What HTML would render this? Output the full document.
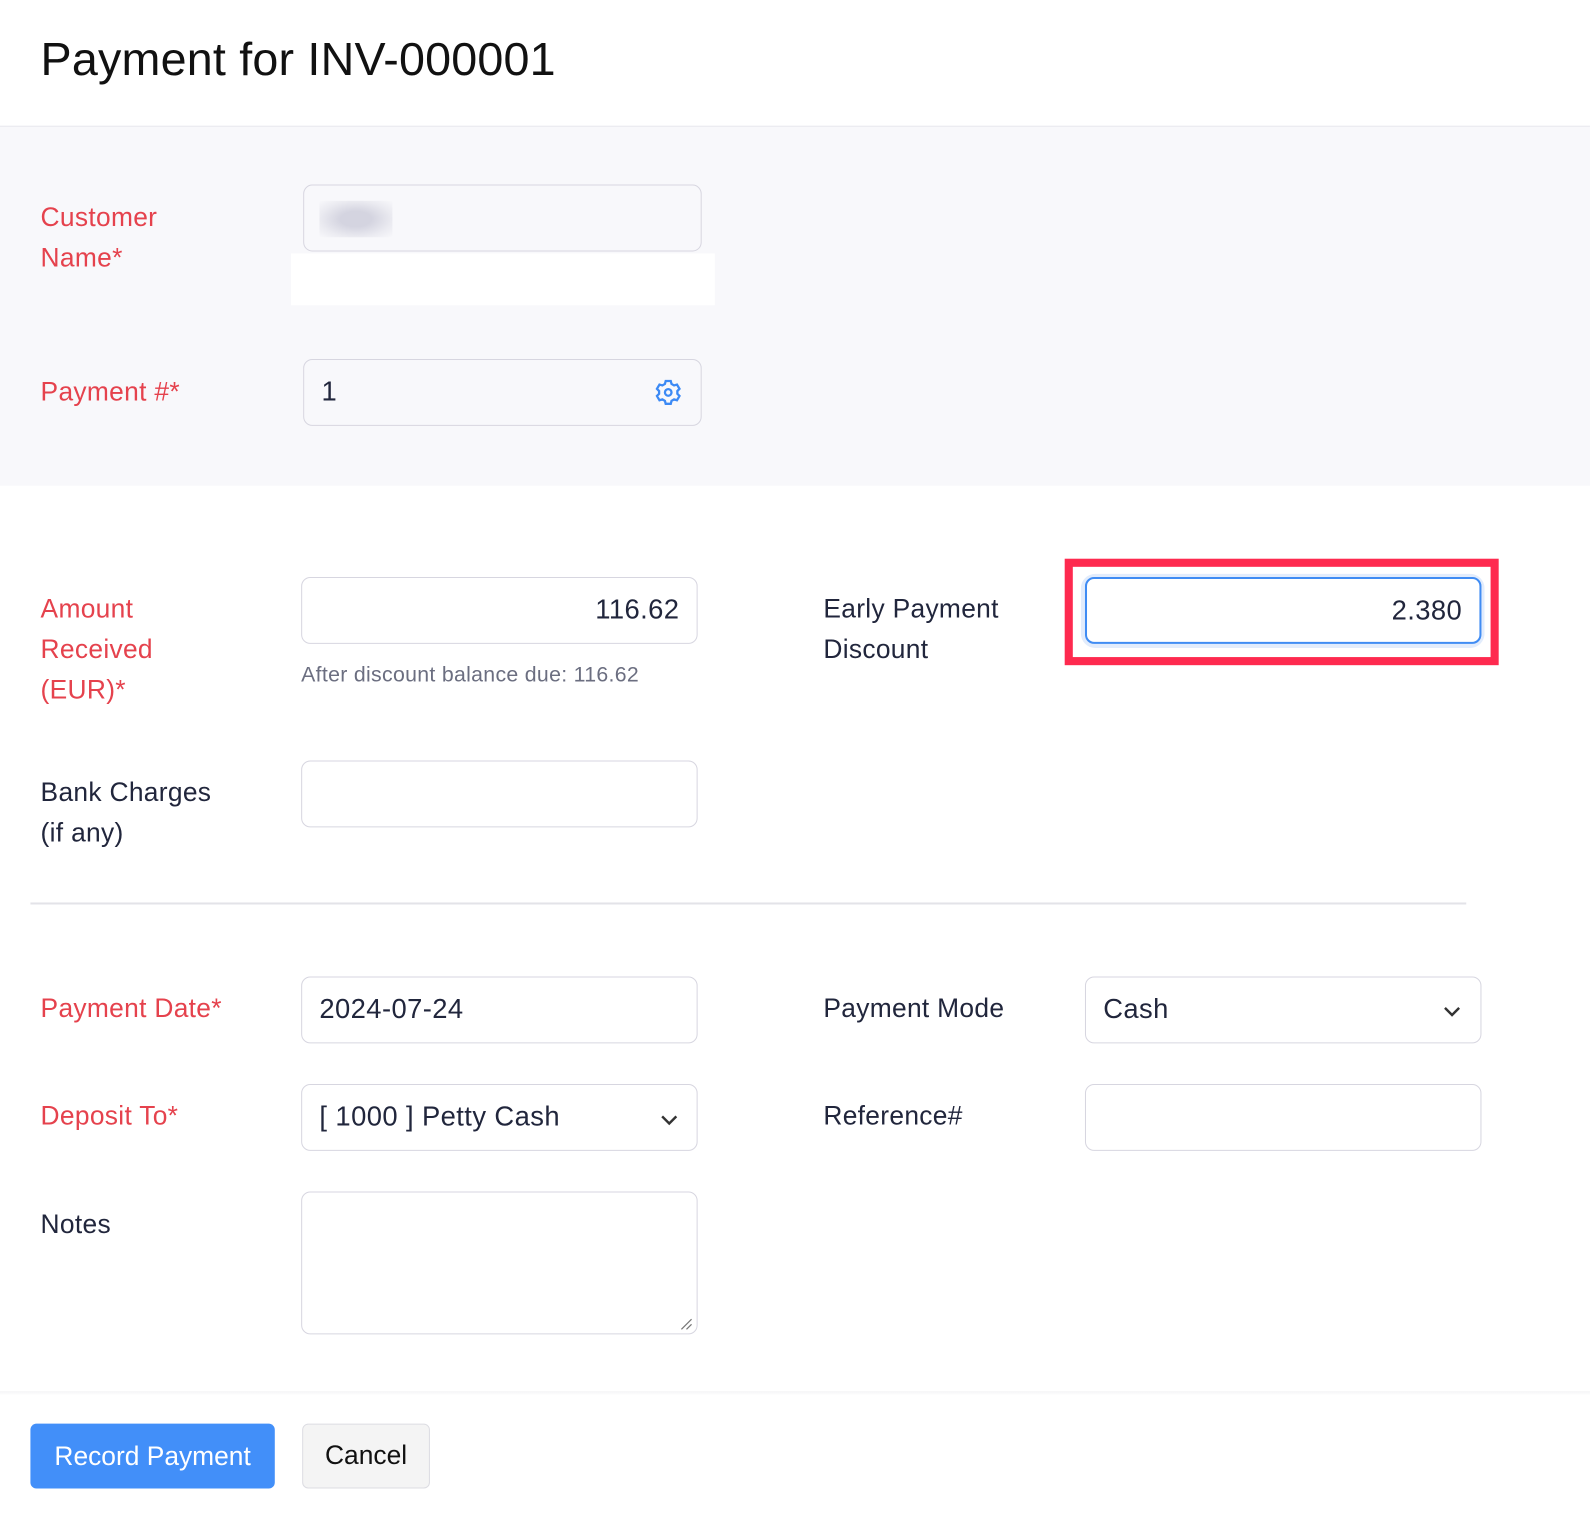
<!DOCTYPE html><html><head><style>
*{box-sizing:border-box;margin:0;padding:0}
body{width:1590px;height:1518px;background:#fff;font-family:"Liberation Sans",sans-serif;color:#21263c;overflow:hidden}
#w{position:relative;width:1568px;height:1497px;transform:scale(1.014);transform-origin:0 0}
.a{position:absolute}
.lbl{position:absolute;font-size:26px;line-height:40px;letter-spacing:0.3px}
.red{color:#e5424d}
.inp{position:absolute;border:1.5px solid #d7d6e0;border-radius:9px;background:#fff;font-size:27px;line-height:63px;padding:0 17px;letter-spacing:0.4px}
</style></head><body><div id="w">
<div class="a" style="left:40px;top:31px;font-size:46px;color:#111;letter-spacing:0.2px">Payment for INV-000001</div>
<div class="a" style="left:0;top:124px;width:1568px;height:355px;background:#f8f8fb;border-top:1px solid #e8e8ee"></div>
<div class="lbl red" style="left:40px;top:194px">Customer<br>Name*</div>
<div class="inp" style="left:299px;top:182px;width:393px;height:66px;background:#f8f8fb"></div>
<div class="a" style="left:315px;top:198px;width:72px;height:36px;background:radial-gradient(ellipse at center,#d4d4e0 30%,#ebebf1 70%,#f8f8fb 100%)"></div>
<div class="a" style="left:287px;top:250px;width:418px;height:51px;background:#fff"></div>
<div class="lbl red" style="left:40px;top:366px">Payment #*</div>
<div class="inp" style="left:299px;top:354px;width:393px;height:66px;background:#f8f8fb">1</div>
<svg class="a" style="left:644px;top:372px" width="30" height="30" viewBox="0 0 24 24" fill="none" stroke="#3c8af5" stroke-width="1.8"><path d="M10 3h4l.6 2.3 2 1.2 2.3-.7 2 3.4-1.7 1.7v2.2l1.7 1.7-2 3.4-2.3-.7-2 1.2L14 21h-4l-.6-2.3-2-1.2-2.3.7-2-3.4 1.7-1.7v-2.2L3.1 9.2l2-3.4 2.3.7 2-1.2z"/><circle cx="12" cy="12" r="2.6"/></svg>
<div class="lbl red" style="left:40px;top:580px">Amount<br>Received<br>(EUR)*</div>
<div class="inp" style="left:297px;top:569px;width:391px;height:66px;text-align:right">116.62</div>
<div class="a" style="left:297px;top:654px;font-size:21px;color:#6b6e80;letter-spacing:0.3px">After discount balance due: 116.62</div>
<div class="lbl" style="left:812px;top:580px">Early Payment<br>Discount</div>
<div class="a" style="left:1050px;top:551px;width:428px;height:105px;border:8px solid #fe2a4f"></div>
<div class="a" style="left:1066px;top:566px;width:398px;height:73px;border-radius:14px;background:#e2ecfc"></div>
<div class="inp" style="left:1070px;top:569px;width:391px;height:66px;text-align:right;border:2px solid #408cf3">2.380</div>
<div class="lbl" style="left:40px;top:761px">Bank Charges<br>(if any)</div>
<div class="inp" style="left:297px;top:750px;width:391px;height:66px"></div>
<div class="a" style="left:30px;top:890px;width:1416px;height:1.5px;background:#e3e3e8"></div>
<div class="lbl red" style="left:40px;top:974px">Payment Date*</div>
<div class="inp" style="left:297px;top:963px;width:391px;height:66px">2024-07-24</div>
<div class="lbl" style="left:812px;top:974px">Payment Mode</div>
<div class="inp" style="left:1070px;top:963px;width:391px;height:66px">Cash</div>
<svg class="a" style="left:1422px;top:990px" width="20" height="14" viewBox="0 0 20 14"><path d="M3 4l7 7 7-7" fill="none" stroke="#333" stroke-width="2.4"/></svg>
<div class="lbl red" style="left:40px;top:1080px">Deposit To*</div>
<div class="inp" style="left:297px;top:1069px;width:391px;height:66px">[ 1000 ] Petty Cash</div>
<svg class="a" style="left:650px;top:1097px" width="20" height="14" viewBox="0 0 20 14"><path d="M3 4l7 7 7-7" fill="none" stroke="#333" stroke-width="2.4"/></svg>
<div class="lbl" style="left:812px;top:1080px">Reference#</div>
<div class="inp" style="left:1070px;top:1069px;width:391px;height:66px"></div>
<div class="lbl" style="left:40px;top:1187px">Notes</div>
<div class="inp" style="left:297px;top:1175px;width:391px;height:141px"></div>
<svg class="a" style="left:670px;top:1299px" width="14" height="14"><path d="M2 12L12 2M7 12l5-5" stroke="#777" stroke-width="1.2"/></svg>
<div class="a" style="left:0;top:1372px;width:1568px;height:4px;background:linear-gradient(#f4f4f6,#fff)"></div>
<div class="a" style="left:30px;top:1404px;width:241px;height:64px;background:#428ff9;border-radius:6px;color:#fff;font-size:26px;line-height:64px;text-align:center">Record Payment</div>
<div class="a" style="left:298px;top:1404px;width:126px;height:64px;background:#f4f4f4;border:1.5px solid #dcdce2;border-radius:6px;color:#111;font-size:26px;line-height:61px;text-align:center">Cancel</div>
</div></body></html>
